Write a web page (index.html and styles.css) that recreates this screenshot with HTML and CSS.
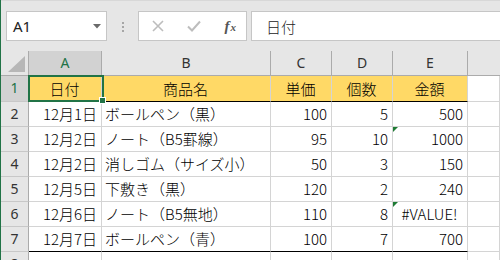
FILE: index.html
```html
<!DOCTYPE html>
<html lang="ja">
<head>
    <meta charset="UTF-8">
    <title>Excel</title>
    <link rel="stylesheet" href="styles.css">
</head>
<body>
    <div class="app">
        <!-- 数式バー -->
        <div class="formula-bar">
            <div class="name-box">
                <span>A1</span>
                <svg class="caret" width="8" height="5" viewBox="0 0 8 5"><path d="M0 0H8L4 4.5Z" fill="#6a6a6a"/></svg>
            </div>
            <div class="grip"><i></i><i></i><i></i></div>
            <div class="fx-buttons">
                <svg width="12" height="12" viewBox="0 0 12 12"><path d="M1 1L11 11M11 1L1 11" stroke="#bdbdbd" stroke-width="1.6"/></svg>
                <svg width="14" height="12" viewBox="0 0 14 12"><path d="M1 6.5L5 10.5L13 1.5" stroke="#bdbdbd" stroke-width="2" fill="none"/></svg>
                <span class="fx"><i>f</i><i class="sub">x</i></span>
            </div>
            <div class="formula-input">日付</div>
        </div>

        <!-- シート -->
        <div class="sheet">
            <div class="corner"><svg width="17" height="16" viewBox="0 0 17 16"><path d="M17 0V16H0Z" fill="#b7b7b7"/></svg></div>
            <div class="h sel">A</div>
            <div class="h">B</div>
            <div class="h">C</div>
            <div class="h">D</div>
            <div class="h">E</div>
            <div class="h blank"></div>

            <div class="rh sel">1</div>
            <div class="c head">日付</div>
            <div class="c head">商品名</div>
            <div class="c head">単価</div>
            <div class="c head">個数</div>
            <div class="c head">金額</div>
            <div class="c"></div>

            <div class="rh">2</div>
            <div class="c r">12月1日</div>
            <div class="c">ボールペン（黒）</div>
            <div class="c r">100</div>
            <div class="c r">5</div>
            <div class="c r">500</div>
            <div class="c"></div>

            <div class="rh">3</div>
            <div class="c r">12月2日</div>
            <div class="c">ノート（B5罫線）</div>
            <div class="c r">95</div>
            <div class="c r">10</div>
            <div class="c r flag">1000</div>
            <div class="c"></div>

            <div class="rh">4</div>
            <div class="c r">12月2日</div>
            <div class="c">消しゴム（サイズ小）</div>
            <div class="c r">50</div>
            <div class="c r">3</div>
            <div class="c r">150</div>
            <div class="c"></div>

            <div class="rh">5</div>
            <div class="c r">12月5日</div>
            <div class="c">下敷き（黒）</div>
            <div class="c r">120</div>
            <div class="c r">2</div>
            <div class="c r">240</div>
            <div class="c"></div>

            <div class="rh">6</div>
            <div class="c r">12月6日</div>
            <div class="c">ノート（B5無地）</div>
            <div class="c r">110</div>
            <div class="c r">8</div>
            <div class="c m flag">#VALUE!</div>
            <div class="c"></div>

            <div class="rh">7</div>
            <div class="c r last">12月7日</div>
            <div class="c last">ボールペン（青）</div>
            <div class="c r last">100</div>
            <div class="c r last">7</div>
            <div class="c r last">700</div>
            <div class="c"></div>

            <div class="rh">8</div>
            <div class="c"></div>
            <div class="c"></div>
            <div class="c"></div>
            <div class="c"></div>
            <div class="c"></div>
            <div class="c"></div>

            <!-- 選択セル A1 -->
            <div class="selection"><span class="handle"></span></div>
        </div>
    </div>
</body>
</html>
```

FILE: styles.css
```css
body {
    margin: 0;
    width: 500px;
    height: 260px;
    overflow: hidden;
    background: #e6e6e6;
    font-family: "Noto Sans CJK JP", sans-serif;
    color: #000;
}

.app {
    border-left: 1px solid #217346;
    height: 260px;
    box-sizing: border-box;
}

/* ---- 数式バー ---- */
.formula-bar {
    height: 51px;
    display: flex;
    align-items: flex-start;
    padding: 11px 0 0 5px;
    box-sizing: border-box;
    border-top: 1px solid #d8d8d8;
}

.name-box,
.fx-buttons,
.formula-input {
    height: 30px;
    box-sizing: border-box;
    background: #fff;
    border: 1px solid #c6c6c6;
    display: flex;
    align-items: center;
    margin-top: -1px;
}

.name-box {
    width: 101px;
    padding: 0 5px 0 6px;
    justify-content: space-between;
    font-family: "Noto Sans", sans-serif;
    font-size: 15px;
    color: #222;
}

.grip {
    width: 31px;
    height: 30px;
    display: flex;
    flex-direction: column;
    align-items: center;
    justify-content: center;
    gap: 2px;
}

.grip i {
    width: 2px;
    height: 2px;
    background: #a6a6a6;
}

.fx-buttons {
    width: 109px;
    padding: 0 10px 0 13px;
    justify-content: space-between;
}

.fx {
    font-family: "Liberation Serif", serif;
    font-size: 15px;
    color: #555;
    font-weight: bold;
}

.fx .sub {
    font-size: 11px;
    margin-left: 1px;
}

.formula-input {
    flex: 1;
    margin-left: 4px;
    border-right: none;
    padding-left: 14px;
    font-size: 15px;
    font-weight: 300;
    color: #222;
}

/* ---- シート ---- */
.sheet {
    position: relative;
    display: grid;
    grid-template-columns: 28px 73px 169px 61px 61px 75px 1fr;
    grid-template-rows: 25px 26px repeat(6, 25px) 25px;
    background: #fff;
}

.corner,
.h,
.rh {
    background: #e6e6e6;
    box-sizing: border-box;
    color: #333;
    font-family: "Noto Sans", sans-serif;
    font-size: 14px;
}

.corner {
    border-right: 1px solid #ababab;
    border-bottom: 1px solid #ababab;
    display: flex;
    align-items: flex-end;
    justify-content: flex-end;
    padding: 0 3px 3px 0;
}

.h {
    border-right: 1px solid #ababab;
    border-bottom: 1px solid #ababab;
    text-align: center;
    line-height: 24px;
}

.h.blank {
    border-right: none;
}

.rh {
    border-right: 1px solid #ababab;
    border-bottom: 1px solid #c8c8c8;
    text-align: center;
    line-height: 24px;
}

.h.sel,
.rh.sel {
    background: #d2d2d2;
    color: #217346;
}

.c {
    box-sizing: border-box;
    border-right: 1px solid #d4d4d4;
    border-bottom: 1px solid #d4d4d4;
    font-size: 15px;
    font-weight: 300;
    line-height: 24px;
    padding: 0 4px 0 3px;
    white-space: nowrap;
    position: relative;
}

.c.r {
    text-align: right;
}

.c.m {
    text-align: center;
}

.c.head {
    background: #ffd966;
    text-align: center;
    border-bottom: 1px solid #000;
    line-height: 25px;
}

.c.last {
    border-bottom: 1px solid #000;
}

/* エラーインジケーター */
.c.flag::before {
    content: "";
    position: absolute;
    left: 0;
    top: 0;
    border-top: 5px solid #1e7b34;
    border-right: 5px solid transparent;
}

.selection {
    position: absolute;
    left: 27px;
    top: 24px;
    width: 76px;
    height: 27px;
    border: 2px solid #217346;
    box-sizing: border-box;
}

.handle {
    position: absolute;
    right: -4px;
    bottom: -4px;
    width: 7px;
    height: 7px;
    background: #217346;
    border: 1px solid #fff;
    box-sizing: border-box;
}
```
